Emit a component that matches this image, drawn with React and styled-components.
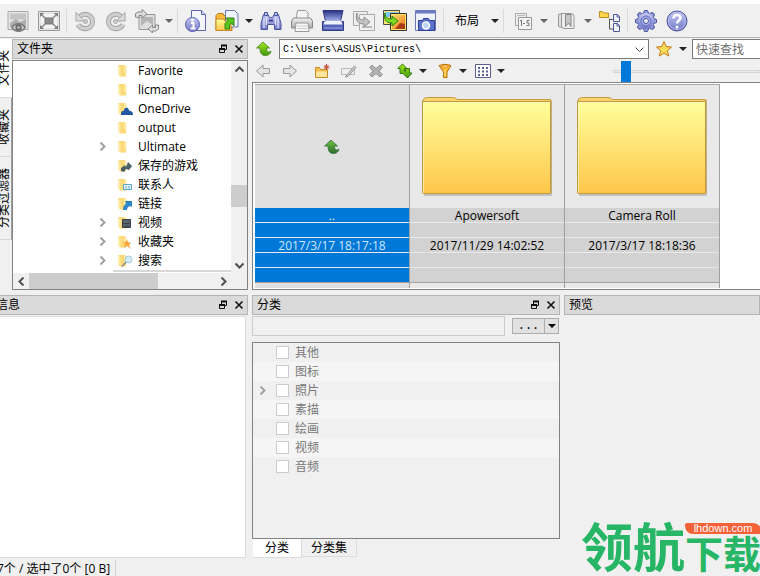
import { useState } from "react";
import styled, { createGlobalStyle } from "styled-components";

const GlobalStyle = createGlobalStyle`
  * {
    box-sizing: border-box;
  }

  body {
    margin: 0;
    overflow: hidden;
    background-color: #f0f0f0;
    color: #000;
    font: 12px/18px "Open Sans", "Noto Sans CJK SC", sans-serif;
  }

  button, input {
    margin: 0;
    padding: 0;
    border: none;
    border-radius: 0;
    background: none;
    color: inherit;
    font: inherit;
  }

  svg {
    display: block;
    flex: none;
  }
`;

// the window hangs over the left edge of the screen
const Window = styled.div`
  position: relative;
  display: flex;
  flex-direction: column;
  min-height: 100vh;
  margin-left: -9px;
  border-top: 4px solid white;
  white-space: nowrap;
`;

const Toolbar = styled.div`
  display: flex;
  align-items: center;
  height: 34px;
  padding-left: 11px;
  border-bottom: 1px solid #b4b4b4;
`;

const ToolButton = styled.button`
  display: flex;
  align-items: center;
  justify-content: center;
  flex: none;
  width: ${(props) => props.$width || 31}px;
  height: ${(props) => props.$height || 30}px;
`;

const Separator = styled.div`
  width: 1px;
  height: 24px;
  margin: 0 2px;
  background-color: #dadada;
`;

const Workspace = styled.div`
  flex: 1;
  display: grid;
  grid-template-rows: 252px 1fr;
  row-gap: 5px;
`;

const TopPanes = styled.div`
  display: grid;
  grid-template-columns: 21px 236px minmax(0, 1fr);
  min-height: 0;
`;

const BottomPanes = styled.div`
  display: grid;
  grid-template-columns: 257px minmax(0, 11fr) minmax(0, 7fr);
  column-gap: 4px;
`;

const SideTabs = styled.div`
  display: flex;
  flex-direction: column;
  padding-top: 1px;
`;

const SideTab = styled.button`
  display: flex;
  align-items: center;
  justify-content: center;
  padding: 11px 0;
  padding-left: 5px;
  border-right: 1px solid ${(props) => (props.$active ? "white" : "#a0a0a0")};
  border-bottom: 1px solid #d8d8d8;
  background-color: ${(props) => (props.$active ? "white" : "#f0f0f0")};
`;

const SideLabel = styled.span`
  writing-mode: vertical-rl;
  text-orientation: sideways;
  transform: rotate(180deg);
`;

const Dock = styled.section`
  display: flex;
  flex-direction: column;
  min-width: 0;
  min-height: 0;
  padding-top: ${(props) => props.$top || 0}px;
`;

const DockHeader = styled.header`
  display: flex;
  align-items: center;
  flex: none;
  height: 20px;
  padding: 0 0 0 4px;
  border: 1px solid #b4b4b4;
  background-color: #dadada;
`;

const DockTitle = styled.h2`
  flex: 1;
  margin: 0;
  font-size: 12px;
  font-weight: 400;
`;

const TreeBox = styled.div`
  flex: 1;
  display: grid;
  grid-template-columns: minmax(0, 1fr) 16px;
  grid-template-rows: minmax(0, 1fr) 16px;
  min-height: 0;
  margin-top: 1px;
  border: 1px solid #828282;
  background-color: #f0f0f0;
`;

const Tree = styled.ul`
  margin: 0;
  padding: 0 0 0 82px;
  overflow: hidden;
  list-style: none;
  background-color: white;
`;

const TreeRow = styled.li`
  display: grid;
  grid-template-columns: 20px 20px auto;
  align-items: center;
  height: 19px;
  padding-left: 3px;
`;

const TreeEdge = styled.li`
  height: 2px;
  margin-left: 18px;
  background-color: #d8d8d8;
`;

const Scrollbar = styled.div`
  display: flex;
  flex-direction: ${(props) => (props.$vertical ? "column" : "row")};
  background-color: #f0f0f0;
`;

const ScrollTrack = styled.div`
  flex: 1;
  display: flex;
  flex-direction: inherit;
`;

const ScrollSpace = styled.div`
  flex: ${(props) => props.$part};
  background-color: ${(props) => (props.$thumb ? "#cdcdcd" : "transparent")};
`;

const Browser = styled.main`
  display: flex;
  flex-direction: column;
  min-width: 0;
  padding-left: 4px;
`;

const AddressRow = styled.div`
  display: flex;
  align-items: center;
  height: 22px;
`;

const AddressBox = styled.div`
  flex: 1;
  display: flex;
  align-items: center;
  height: 20px;
  margin-left: 4px;
  border: 1px solid #7a7a7a;
  background-color: white;
`;

const AddressInput = styled.input`
  flex: 1;
  min-width: 0;
  padding: 2px 0 0 3px;
  outline: none;
  font: 10px/16px "Liberation Mono", monospace;
`;

const FindInput = styled.input`
  width: 68px;
  height: 20px;
  margin-left: 3px;
  padding-left: 3px;
  border: 1px solid #7a7a7a;
  border-right: none;
  background-color: white;

  &::placeholder {
    color: #6d6d6d;
  }
`;

const BrowserTools = styled.div`
  display: flex;
  align-items: center;
  height: 22px;
`;

const ToolGap = styled.div`
  width: ${(props) => props.$width}px;
`;

const Slider = styled.input`
  flex: 1;
  min-width: 0;
  height: 21px;
  margin-left: 106px;
  appearance: none;

  &::-webkit-slider-runnable-track {
    height: 3px;
    border: 1px solid #d6d6d6;
    background-color: #e7eaea;
  }

  &::-webkit-slider-thumb {
    appearance: none;
    width: 10px;
    height: 21px;
    margin-top: -10px;
    background-color: #0078d7;
  }
`;

const FileList = styled.div`
  flex: 1;
  display: flex;
  min-height: 0;
  border: 1px solid #828282;
  border-right: none;
  padding: 1px 0 1px 2px;
  background-color: white;
`;

const FileCell = styled.article`
  display: grid;
  grid-template-rows: 123px 75px 1fr;
  width: 155px;
  border-top: 1px solid #a8a8a8;
  border-right: 1px solid #a0a0a0;
  background-color: ${(props) => (props.$selected ? "#e0e0e0" : "#e9e9e9")};
`;

const Thumb = styled.div`
  display: flex;
  align-items: center;
  justify-content: center;
`;

const Details = styled.div`
  display: grid;
  grid-template-rows: repeat(5, 15px);
  border-bottom: 1px solid #a0a0a0;
  background-color: ${(props) => (props.$selected ? "#0078d7" : "#d2d2d2")};
  color: ${(props) => (props.$selected ? "#cfe8ff" : "#000")};
  line-height: 15px;
  text-align: center;
`;

const Detail = styled.div`
  border-bottom: 1px solid #e9e9e9;

  &:last-child {
    border-bottom: none;
  }
`;

const InfoBox = styled.div`
  flex: 1;
  margin: 1px 2px 0 0;
  border: 1px solid #dcdcdc;
  background-color: white;
`;

const FilterRow = styled.div`
  display: flex;
  align-items: center;
  justify-content: space-between;
  gap: 7px;
  margin: 1px 1px 6px 0;
`;

const FilterInput = styled.input`
  flex: 1;
  min-width: 0;
  height: 20px;
  border: 1px solid #cccccc;
`;

const SplitButton = styled.div`
  display: flex;
  width: 47px;
  height: 16px;
  border: 1px solid #adadad;
  background-color: #e1e1e1;
`;

const DotsButton = styled.button`
  flex: 1;
  border-right: 1px solid #adadad;
  font: 12px/14px "Liberation Mono", monospace;
`;

const CategoryList = styled.ul`
  flex: 1;
  margin: 0;
  padding: 0;
  border: 1px solid #828282;
  list-style: none;
`;

const CategoryRow = styled.li`
  display: grid;
  grid-template-columns: 18px auto;
  align-items: center;
  height: 19px;
  padding-left: 5px;
  color: #787878;

  &:nth-child(even) {
    background-color: #f5f5f5;
  }
`;

const CheckLabel = styled.label`
  grid-column: 2;
  display: flex;
  align-items: center;
  gap: 6px;
`;

const Checkbox = styled.input`
  width: 13px;
  height: 13px;
  border: 1px solid #cccccc;
  background-color: ${(props) => (props.checked ? "#0078d7" : "white")};
  appearance: none;
`;

const TabRow = styled.div`
  display: flex;
  align-items: flex-start;
  padding-left: 1px;
`;

const Tab = styled.button`
  height: ${(props) => (props.$active ? 19 : 18)}px;
  padding: 0 ${(props) => (props.$active ? 12 : 9)}px;
  border: 1px solid #dcdcdc;
  border-top: none;
  border-left: none;
  background-color: ${(props) => (props.$active ? "white" : "#f0f0f0")};
`;

const StatusBar = styled.footer`
  display: flex;
  align-items: center;
  height: 18px;
  padding: 4px 0 0 6px;
`;

const StatusText = styled.span`
  padding-right: 5px;
  border-right: 1px solid #d0d0d0;
`;

const Brand = styled.div`
  position: absolute;
  right: -1px;
  bottom: 6px;
  display: flex;
  align-items: flex-end;
  color: #27b566;
  font-family: "Noto Sans CJK SC", sans-serif;
  font-weight: 700;
`;

const BrandLarge = styled.span`
  font-size: 52px;
  line-height: 50px;
`;

const BrandSide = styled.div`
  display: flex;
  flex-direction: column;
`;

const BrandSmall = styled.span`
  font-size: 38px;
  line-height: 36px;
`;

const BrandRibbon = styled.span`
  height: 11px;
  border-radius: 2px 8px 0 8px;
  background-color: #f4623a;
  color: white;
  font: 11px/11px "Liberation Sans", sans-serif;
  text-align: center;
`;

const Caret = ({ color = "#222" }) => (
  <svg width="8" height="4" viewBox="0 0 8 4">
    <path d="M0 0h8L4 4z" fill={color} />
  </svg>
);

const turns = { right: 0, down: 90, left: 180, up: 270 };

const Chevron = ({ to = "right", color = "#505050", size = 9, weight = 2 }) => (
  <svg width={size} height={size} viewBox="0 0 9 9">
    <path
      d="M2.5 0.5l4 4-4 4"
      transform={`rotate(${turns[to]} 4.5 4.5)`}
      fill="none"
      stroke={color}
      strokeWidth={weight}
    />
  </svg>
);

const Svg = ({ size = 24, children }) => (
  <svg width={size} height={size} viewBox={`0 0 ${size} ${size}`} fill="none">
    {children}
  </svg>
);

const Defs = styled.svg`
  position: absolute;
`;

const Gradients = () => (
  <Defs width="0" height="0">
    <defs>
      <linearGradient id="folder" x2="0" y2="1">
        <stop stopColor="#ffff9c" />
        <stop offset="1" stopColor="#ffc64a" />
      </linearGradient>
      <linearGradient id="grey" x2="0" y2="1">
        <stop stopColor="#f2f2f2" />
        <stop offset="1" stopColor="#aaa" />
      </linearGradient>
      <linearGradient id="green" x2="0" y2="1">
        <stop stopColor="#a6ea1c" />
        <stop offset="1" stopColor="#3f9710" />
      </linearGradient>
      <linearGradient id="forest" x2="0" y2="1">
        <stop stopColor="#6fc63c" />
        <stop offset="1" stopColor="#2b6a30" />
      </linearGradient>
      <linearGradient id="blue" x2="0" y2="1">
        <stop stopColor="#c6caf4" />
        <stop offset="1" stopColor="#7077c4" />
      </linearGradient>
      <linearGradient id="navy" x2="0" y2="1">
        <stop stopColor="#272f86" />
        <stop offset="1" stopColor="#a4b0ea" />
      </linearGradient>
      <linearGradient id="sunset" x2="1" y2="1">
        <stop stopColor="#ffe36a" />
        <stop offset="1" stopColor="#e8701a" />
      </linearGradient>
    </defs>
  </Defs>
);

const ViewIcon = () => (
  <Svg>
    <path d="M2 2.500h20v18H2z" fill="#e4e4e4" stroke="#aaa" />
    <path d="M4 4.500h16v6H4z" fill="#c4c4c4" />
    <path d="M4 14l6-4 4 3 6-3v8H4z" fill="#aeaeae" />
    <path d="M6 18.500c3-5 10-5 13 0-3 5-10 5-13 0z" fill="#ddd" stroke="#777" strokeWidth="1.500" />
    <circle cx="12.500" cy="18.500" r="2.500" fill="#aaa" stroke="#666" strokeWidth="1.500" />
  </Svg>
);

const FullscreenIcon = () => (
  <Svg>
    <path d="M1.500 2.500h21v19h-21z" fill="#e6e6e6" stroke="#999" />
    <path d="M4 5h16v14H4z" fill="#f4f4f4" />
    <path d="M8 9h8v6H8z" fill="#8c8c8c" stroke="#777" />
    <path d="M3 8V4h4zM21 8V4h-4zM3 16v4h4zM21 16v4h-4z" fill="#777" />
    <path d="M4 5l4 4M20 5l-4 4M20 19l-4-4M4 19l4-4" stroke="#888" strokeWidth="1.500" />
  </Svg>
);

const RotateIcon = ({ flip }) => (
  <Svg>
    <g transform={flip ? "matrix(-1 0 0 1 24 0)" : undefined}>
      <path d="M7 7.500C11 3 19.500 6 19.500 12.500c0 8-11 9.500-14.500 3" stroke="#a4a4a4" strokeWidth="5" />
      <path d="M7 7.500C11 3 19.500 6 19.500 12.500c0 8-11 9.500-14.500 3" stroke="#d0d0d0" strokeWidth="3" />
      <path d="M3 3.500v8.500h8.500L8.500 9z" fill="#dcdcdc" stroke="#a4a4a4" />
      <circle cx="12.500" cy="12.500" r="2" fill="#ccc" stroke="#aaa" />
    </g>
  </Svg>
);

const RotateImageIcon = () => (
  <Svg>
    <path d="M4 5.500h16v15H4z" fill="#ddd" stroke="#999" />
    <path d="M6 8h12v8l-6-4-6 5z" fill="#b5b5b5" />
    <path d="M.5 8V4.500L3 3h4V.5L12 5 7 9V6.500H4V9z" fill="#ddd" stroke="#888" />
    <path d="M23.500 16v4l-3 2h-3v2L13 20l4.500-4v2.500h3V16z" fill="#ddd" stroke="#888" />
  </Svg>
);

const InfoIcon = () => (
  <Svg>
    <path d="M7.500 1.500h10l4 4v16h-14z" fill="#f4f6ff" stroke="#5f67a8" />
    <path d="M17.500 1.500v4h4" fill="#ccd2f5" stroke="#5f67a8" />
    <circle cx="8.500" cy="15.500" r="7" fill="url(#blue)" stroke="#5a61b0" />
    <path d="M7 14h2.500v5.500M6.500 19.500h5" stroke="white" strokeWidth="2" />
    <circle cx="8.500" cy="11" r="1.500" fill="white" />
  </Svg>
);

const OpenFolderIcon = () => (
  <Svg>
    <path d="M1 6.500l2-2h5l1 2h8v15H1z" fill="#f9b93c" stroke="#b9771c" />
    <path d="M10.500 1.500h9l3.500 3.500v13H10.500z" fill="#f0f4ff" stroke="#6a78b0" />
    <path d="M1 21.500V10h7l2 2h6v9.500z" fill="url(#folder)" stroke="#c58a25" />
    <path d="M10 20v-5.500l3-3-2.500-2.500H19v8L16.500 14l-2 2v4z" fill="#58c81c" stroke="#2f7d10" />
  </Svg>
);

const BinocularsIcon = () => (
  <Svg>
    <path d="M4.500 5.500h4.500l1.500 3h3l1.500-3h4.500l2.500 9v6h-6.500v-5h-7v5H2v-6z" fill="url(#blue)" stroke="#4a55a0" />
    <path d="M5.500 3.500h3v3h-3zM15.500 3.500h3v3h-3z" fill="#b8c2f0" stroke="#4a55a0" />
    <path d="M5 9v10M7.500 8v8M16.500 8v8M19 9v10" stroke="#dfe4ff" strokeWidth="1.200" />
    <path d="M10 11.500h4" stroke="#38438c" strokeWidth="2" />
  </Svg>
);

const PrinterIcon = () => (
  <Svg>
    <path d="M6 10l1.500-8.500h8L18 4v6z" fill="#f4f4f4" stroke="#999" />
    <path d="M1.500 12l2-3h17l2 3v7h-21z" fill="url(#grey)" stroke="#888" />
    <path d="M6 14h12l1 8.500H5z" fill="#f7f7f7" stroke="#999" />
    <path d="M7 17h10M7 19.500h10" stroke="#ccc" />
  </Svg>
);

const ScannerIcon = () => (
  <Svg>
    <path d="M2 1.500h20L19.500 12h-15z" fill="url(#navy)" stroke="#2d357e" />
    <path d="M1.500 12.500h21v9h-21z" fill="#5564b8" stroke="#313a80" />
    <path d="M4 11.500h16l1.500 4h-19z" fill="#eef2ff" />
    <path d="M3 19h18" stroke="#98a4e2" />
  </Svg>
);

const ConvertIcon = () => (
  <Svg>
    <path d="M1.500 2.500h14v14h-14z" fill="#eee" stroke="#aaa" />
    <path d="M7.500 5.500h15v16h-15z" fill="#f0f0f0" stroke="#aaa" />
    <path d="M10 17h10v2H10z" fill="#bbb" />
    <path d="M5 4c0 6 3 7 7 7V8l6 5-6 5v-3C6 15 3 12 5 4z" fill="#c4c4c4" stroke="#8c8c8c" />
  </Svg>
);

const ConvertImageIcon = () => (
  <Svg>
    <path d="M.5 1.500h16v14H.5z" fill="#ffe775" stroke="#4a4a4a" />
    <path d="M2 3h13v5H2z" fill="#7dc6f0" />
    <path d="M7.500 4.500h16v17h-16z" fill="#ffe36a" stroke="#333" />
    <path d="M9 6h13v14H9z" fill="url(#sunset)" />
    <path d="M12 20l5-6 5 1v5z" fill="#a83a14" />
    <path d="M2 4c0 5 3 6 7 6V7l6 5-6 5v-3C3 14 0 10 2 4z" fill="#7fdd20" stroke="#2f7d10" />
  </Svg>
);

const CaptureIcon = () => (
  <Svg>
    <path d="M1.500 1.500h20v20h-20z" fill="#eef1ff" stroke="#7079b4" />
    <path d="M1.500 1.500h20v3h-20z" fill="#6d78c2" />
    <path d="M4.500 11.500h4l1-2h5l1 2h5v10h-16z" fill="#5d72cc" stroke="#2f3f90" />
    <circle cx="12" cy="16.500" r="3.500" fill="#bcd6fa" stroke="white" strokeWidth="1.500" />
  </Svg>
);

const PagesIcon = () => (
  <Svg>
    <path d="M5.500 4.500h11v12h-11z" fill="#eee" stroke="#aaa" />
    <path d="M8.500 8.500h13v12h-13z" fill="#f4f4f4" stroke="#999" />
    <path d="M7 6.500h8" stroke="#bbb" />
    <path d="M10 12l1.500-1v6M13 14.500h2M19.500 11.500H17v2.500h2v2.500h-2.500" stroke="#777" />
  </Svg>
);

const BookIcon = () => (
  <Svg>
    <path d="M4.500 5.500l3-1v14l-3-1z" fill="#ddd" stroke="#999" />
    <path d="M7.500 4.500H17q3 0 3 3v12H10q-2.500 0-2.500-3z" fill="#eee" stroke="#999" />
    <path d="M11.500 5.500H17v12L14.500 14l-3 3.500z" fill="#c6c6c6" stroke="#888" />
  </Svg>
);

const HierarchyIcon = () => (
  <Svg>
    <path d="M1.500 2.500h3l1 1.500h5v4.500h-9z" fill="#ffd54a" stroke="#c08a1c" />
    <path d="M11.500 9.500v10.500h4M11.500 10.500h4" stroke="#555" />
    <path d="M15.500 5.500h4l2 2v5h-6zM15.500 14.500h4l2 2v6h-6z" fill="#f4f6ff" stroke="#4d57a0" />
    <path d="M19 5.500v2.500h2.500M19 14.500v2.500h2.500" stroke="#4d57a0" />
  </Svg>
);

const GearIcon = () => (
  <Svg>
    {[0, 45, 90, 135].map((angle) => (
      <path
        key={angle}
        d="M9.500 4l1-2.500h3l1 2.500v16l-1 2.500h-3l-1-2.500z"
        transform={`rotate(${angle} 12 12)`}
        fill="#929bdc"
        stroke="#4c569f"
      />
    ))}
    <circle cx="12" cy="12" r="8" fill="url(#blue)" />
    <circle cx="12" cy="12" r="5" fill="#a5acec" stroke="#656eb8" />
    <circle cx="12" cy="12" r="2.500" fill="#f0f0f0" stroke="#4c569f" />
  </Svg>
);

const HelpIcon = () => (
  <Svg>
    <circle cx="12" cy="12" r="10" fill="url(#blue)" stroke="#4b519c" />
    <circle cx="12" cy="12" r="8.500" stroke="#b5b9ec" />
    <path d="M8.500 9.500c0-5 7-4.500 7-.5 0 2.500-3.500 2.500-3.500 5.500" stroke="white" strokeWidth="2.500" />
    <circle cx="12" cy="18" r="1.500" fill="white" />
  </Svg>
);

const UpIcon = ({ fill = "url(#green)", stroke = "#3c8412" }) => (
  <Svg size={16}>
    <path d="M7 1l6.500 6h-3c0 4 2 5 4.500 3-1 4-4 5-6.500 4.500C5 14 4 11 4 7H.5z" fill={fill} stroke={stroke} strokeWidth=".8" />
  </Svg>
);

const StarIcon = () => (
  <Svg size={18}>
    <path d="M9 1.500l2.200 5 5.300.6-4 3.600 1.200 5.300L9 13.300 4.300 16l1.200-5.300-4-3.600 5.300-.6z" fill="#ffdc55" stroke="#c47a18" />
  </Svg>
);

const ArrowIcon = ({ flip }) => (
  <Svg size={16}>
    <path
      d="M1.500 8L8 2v3.500h6.500v5H8V14z"
      transform={flip ? "matrix(-1 0 0 1 16 0)" : undefined}
      fill="#e4e4e4"
      stroke="#999"
    />
  </Svg>
);

const NewFolderIcon = () => (
  <Svg size={16}>
    <path d="M1.500 4.500h4l1 2h7v8h-12z" fill="#f6c152" stroke="#c98a2a" />
    <path d="M2 8.500h11v5.500H2z" fill="#ffe59a" />
    <path d="M12.500 1v6M9.500 4h6M10.500 2l4 4M14.500 2l-4 4" stroke="#c2452d" />
  </Svg>
);

const RenameIcon = () => (
  <Svg size={16}>
    <path d="M.5 5.500h13v6H.5z" fill="#eee" stroke="#b8b8b8" />
    <path d="M5 13l8.500-10L15 4.500 7 13.500l-2.500.5z" fill="#ccc" stroke="#999" />
  </Svg>
);

const DeleteIcon = () => (
  <Svg size={16}>
    <path d="M4 2l4 3.500L12 2l2.500 2.500L11 8l3.500 3.500L12 14l-4-3.500L4 14l-2.500-2.500L5 8 1.500 4.500z" fill="#b0b0b0" stroke="#989898" />
  </Svg>
);

const SyncIcon = () => (
  <Svg size={16}>
    <path d="M5.500 1L10 5.500H7.500V8c0 1 1 1 1 0V5.500h4V10H15l-4.500 5L6 10.500h-3V5.500H.8z" fill="url(#green)" stroke="#347a10" />
  </Svg>
);

const FilterIcon = () => (
  <Svg size={16}>
    <path d="M2 2.500q6-2.500 12 0L10 9v5.500H6.500V9z" fill="#fdb72c" stroke="#b8700e" />
    <path d="M4 3.500q4-1.500 8 0l-4 1z" fill="#ffec9e" stroke="#d8922a" strokeWidth=".6" />
    <path d="M8 7v6" stroke="#fff0a0" />
  </Svg>
);

const GridIcon = () => (
  <Svg size={16}>
    <path d="M.5 1.500h15v13H.5z" fill="white" stroke="#5c5c92" />
    <path d="M3 5h10M3 8.500h10M3 12h10" stroke="#555f9a" strokeWidth="2" strokeDasharray="2 2" />
  </Svg>
);

const RestoreIcon = () => (
  <Svg size={10}>
    <path d="M3.500 4V1.500h5v4H6.500" stroke="#111" />
    <path d="M3 1.500h6" stroke="#111" strokeWidth="2" />
    <path d="M1.500 4.500h5v4h-5z" stroke="#111" />
    <path d="M1 5h6" stroke="#111" strokeWidth="2" />
  </Svg>
);

const CloseIcon = () => (
  <Svg size={10}>
    <path d="M1.500 1.500l7 7M8.500 1.500l-7 7" stroke="#111" strokeWidth="1.600" />
  </Svg>
);

const overlays = {
  cloud: <path d="M3 14v-2q1-3 3-2 0-4 4-3 1 3 2 3 3 0 3 4z" fill="#1f56a5" />,
  game: <path d="M3 10l4-3 1 2 2-5 4 4-3 4-3-1-2 3-3-1z" fill="#4d6169" />,
  contact: <path d="M5.500 7.500h8v5h-8zM8 9v2.500M11 9v2.500" fill="#e5f4fb" stroke="#5aa5c8" />,
  link: <path d="M5 14q0-5 3-6L7 5h7v6l-2-1q-3 1-3 4z" fill="#2d86c8" />,
  video: <path d="M4.500 4.500h8v8h-8zM5 8.500h7M6 11h5" fill="#5c646c" stroke="#38404a" />,
  favorite: <path d="M9 5l1 3 3 1-2 2 2 4-4-3-3 2 1-4-2-2h3z" fill="#f6a640" />,
  search: (
    <g>
      <circle cx="10.500" cy="6.500" r="3.500" fill="#d4ecf8" stroke="#a4cbdc" />
      <path d="M8 9l-4 4.500" stroke="#8a8f94" strokeWidth="1.500" />
    </g>
  ),
};

const TreeIcon = ({ kind }) => (
  <Svg size={16}>
    <path d="M.5 2h6L8 3v10.500H2L.5 12z" fill="#fbd977" />
    <path d="M.5 3l2 1v9.500l-2-1.500z" fill="#ffeaa6" />
    <path d="M6 3h2.500v7H6z" fill="#ffe9a0" />
    {overlays[kind]}
  </Svg>
);

const BigFolder = () => (
  <svg width="134" height="102" viewBox="0 0 134 102">
    <path d="M4 100V5q1-3 5-3h24q3 0 5 2h93q1 0 1 1v95z" fill="#555" opacity=".25" />
    <path d="M2.500 97V5q1-3.500 5-3.500h25q3 0 5 2h92.500q1 0 1 1V97z" fill="#fbd36b" stroke="#c29a3e" />
    <path d="M2.500 5.500h128v92H4q-1.500 0-1.500-1.500z" fill="url(#folder)" stroke="#c29a3e" />
    <path d="M3.500 97V6.500h126" stroke="#fff9c4" fill="none" opacity=".7" />
  </svg>
);

const toolItems = [
  { label: "查看", Icon: ViewIcon },
  { label: "全屏", Icon: FullscreenIcon },
  { sep: true },
  { label: "左转", Icon: RotateIcon },
  { label: "右转", Icon: () => <RotateIcon flip /> },
  { label: "无损旋转", Icon: RotateImageIcon, menu: "#666" },
  { sep: true },
  { label: "属性", Icon: InfoIcon },
  { label: "打开", Icon: OpenFolderIcon, menu: "#222" },
  { label: "搜索", Icon: BinocularsIcon },
  { label: "打印", Icon: PrinterIcon },
  { label: "扫描", Icon: ScannerIcon },
  { label: "转换", Icon: ConvertIcon },
  { label: "批量转换", Icon: ConvertImageIcon },
  { label: "捕捉", Icon: CaptureIcon },
  { sep: true },
  { text: "布局", menu: "#222" },
  { sep: true },
  { label: "重命名", Icon: PagesIcon, menu: "#666" },
  { label: "书签", Icon: BookIcon, menu: "#666" },
  { label: "目录树", Icon: HierarchyIcon },
  { sep: true },
  { label: "设置", Icon: GearIcon },
  { label: "帮助", Icon: HelpIcon },
];

const folders = [
  { name: "Favorite" },
  { name: "licman" },
  { name: "OneDrive", kind: "cloud" },
  { name: "output" },
  { name: "Ultimate", parent: true },
  { name: "保存的游戏", kind: "game" },
  { name: "联系人", kind: "contact" },
  { name: "链接", kind: "link" },
  { name: "视频", kind: "video", parent: true },
  { name: "收藏夹", kind: "favorite", parent: true },
  { name: "搜索", kind: "search", parent: true },
];

const files = [
  { name: "..", date: "2017/3/17 18:17:18", up: true },
  { name: "Apowersoft", date: "2017/11/29 14:02:52" },
  { name: "Camera Roll", date: "2017/3/17 18:18:36" },
];

const categories = ["其他", "图标", "照片", "素描", "绘画", "视频", "音频"];

const MenuButton = ({ label, color, height = 20 }) => (
  <ToolButton $width={13} $height={height} aria-label={`${label} ▾`}>
    <Caret color={color} />
  </ToolButton>
);

const ToolItem = ({ item }) => {
  if (item.sep) return <Separator />;
  return (
    <>
      {item.text ? (
        <ToolButton $width={42}>{item.text}</ToolButton>
      ) : (
        <ToolButton aria-label={item.label}>
          <item.Icon />
        </ToolButton>
      )}
      {item.menu && <MenuButton label={item.text || item.label} color={item.menu} />}
    </>
  );
};

const Header = ({ title, fixed }) => (
  <DockHeader>
    <DockTitle>{title}</DockTitle>
    {!fixed && (
      <>
        <ToolButton $width={16} $height={16} aria-label="浮动">
          <RestoreIcon />
        </ToolButton>
        <ToolButton $width={16} $height={16} aria-label="关闭">
          <CloseIcon />
        </ToolButton>
      </>
    )}
  </DockHeader>
);

const Scroll = ({ vertical, before, thumb, after }) => (
  <Scrollbar $vertical={vertical}>
    <ToolButton $width={16} $height={16} aria-label={vertical ? "向上" : "向左"}>
      <Chevron to={vertical ? "up" : "left"} />
    </ToolButton>
    <ScrollTrack>
      <ScrollSpace $part={before} />
      <ScrollSpace $part={thumb} $thumb />
      <ScrollSpace $part={after} />
    </ScrollTrack>
    <ToolButton $width={16} $height={16} aria-label={vertical ? "向下" : "向右"}>
      <Chevron to={vertical ? "down" : "right"} />
    </ToolButton>
  </Scrollbar>
);

const FolderDock = () => (
  <Dock $top={1}>
    <Header title="文件夹" />
    <TreeBox>
      <Tree>
        {folders.map((folder) => (
          <TreeRow key={folder.name}>
            {folder.parent ? <Chevron color="#a0a0a0" /> : <span />}
            <TreeIcon kind={folder.kind} />
            <span>{folder.name}</span>
          </TreeRow>
        ))}
        <TreeEdge />
      </Tree>
      <Scroll vertical before={108} thumb={22} after={50} />
      <Scroll before={0} thumb={128} after={57} />
    </TreeBox>
  </Dock>
);

const FileItem = ({ file }) => (
  <FileCell $selected={file.up}>
    <Thumb>{file.up ? <UpIcon fill="url(#forest)" stroke="#33703a" /> : <BigFolder />}</Thumb>
    <Details $selected={file.up}>
      <Detail>{file.name}</Detail>
      <Detail />
      <Detail>{file.date}</Detail>
      <Detail />
      <Detail />
    </Details>
  </FileCell>
);

const FileBrowser = () => {
  const [path, setPath] = useState("C:\\Users\\ASUS\\Pictures\\");
  const [zoom, setZoom] = useState(5);

  return (
    <Browser>
      <AddressRow>
        <ToolButton $width={23} $height={20} aria-label="上一级">
          <UpIcon />
        </ToolButton>
        <AddressBox>
          <AddressInput aria-label="地址" value={path} onChange={(e) => setPath(e.target.value)} />
          <ToolButton $width={17} $height={18} aria-label="历史">
            <Chevron to="down" weight={1} />
          </ToolButton>
        </AddressBox>
        <ToolGap $width={2} />
        <ToolButton $width={25} $height={20} aria-label="收藏">
          <StarIcon />
        </ToolButton>
        <MenuButton label="收藏" />
        <FindInput aria-label="快速查找" placeholder="快速查找" />
      </AddressRow>
      <BrowserTools>
        <ToolButton $width={22} $height={20} aria-label="后退">
          <ArrowIcon />
        </ToolButton>
        <ToolGap $width={5} />
        <ToolButton $width={22} $height={20} aria-label="前进">
          <ArrowIcon flip />
        </ToolButton>
        <ToolGap $width={7} />
        <ToolButton $width={27} $height={20} aria-label="新建文件夹">
          <NewFolderIcon />
        </ToolButton>
        <ToolButton $width={27} $height={20} aria-label="重命名">
          <RenameIcon />
        </ToolButton>
        <ToolButton $width={27} $height={20} aria-label="删除">
          <DeleteIcon />
        </ToolButton>
        <ToolGap $width={5} />
        <ToolButton $width={22} $height={20} aria-label="排序">
          <SyncIcon />
        </ToolButton>
        <MenuButton label="排序" />
        <ToolGap $width={5} />
        <ToolButton $width={22} $height={20} aria-label="筛选">
          <FilterIcon />
        </ToolButton>
        <MenuButton label="筛选" />
        <ToolGap $width={3} />
        <ToolButton $width={22} $height={20} aria-label="视图">
          <GridIcon />
        </ToolButton>
        <MenuButton label="视图" />
        <Slider type="range" aria-label="缩放" value={zoom} onChange={(e) => setZoom(e.target.value)} />
      </BrowserTools>
      <FileList>
        {files.map((file) => (
          <FileItem key={file.name} file={file} />
        ))}
      </FileList>
    </Browser>
  );
};

const CategoryDock = () => {
  const [checked, setChecked] = useState([]);

  const toggle = (name) =>
    setChecked(checked.includes(name) ? checked.filter((item) => item !== name) : [...checked, name]);

  return (
    <Dock>
      <Header title="分类" />
      <FilterRow>
        <FilterInput aria-label="筛选分类" />
        <SplitButton>
          <DotsButton>...</DotsButton>
          <MenuButton label="更多" color="#000" height={14} />
        </SplitButton>
      </FilterRow>
      <CategoryList>
        {categories.map((name) => (
          <CategoryRow key={name}>
            {name === "照片" && <Chevron color="#a0a0a0" />}
            <CheckLabel>
              <Checkbox type="checkbox" checked={checked.includes(name)} onChange={() => toggle(name)} />
              {name}
            </CheckLabel>
          </CategoryRow>
        ))}
      </CategoryList>
      <TabRow>
        <Tab $active>分类</Tab>
        <Tab>分类集</Tab>
      </TabRow>
    </Dock>
  );
};

const App = () => (
  <Window>
    <GlobalStyle />
    <Gradients />
    <Toolbar>
      {toolItems.map((item, index) => (
        <ToolItem key={index} item={item} />
      ))}
    </Toolbar>
    <Workspace>
      <TopPanes>
        <SideTabs>
          <SideTab $active>
            <SideLabel>文件夹</SideLabel>
          </SideTab>
          <SideTab>
            <SideLabel>收藏夹</SideLabel>
          </SideTab>
          <SideTab>
            <SideLabel>分类过滤器</SideLabel>
          </SideTab>
        </SideTabs>
        <FolderDock />
        <FileBrowser />
      </TopPanes>
      <BottomPanes>
        <Dock>
          <Header title="信息" />
          <InfoBox />
        </Dock>
        <CategoryDock />
        <Dock>
          <Header title="预览" fixed />
        </Dock>
      </BottomPanes>
    </Workspace>
    <StatusBar>
      <StatusText>7个 / 选中了0个 [0 B]</StatusText>
    </StatusBar>
    <Brand>
      <BrandLarge>领航</BrandLarge>
      <BrandSide>
        <BrandRibbon>lhdown.com</BrandRibbon>
        <BrandSmall>下载</BrandSmall>
      </BrandSide>
    </Brand>
  </Window>
);

export default App;
